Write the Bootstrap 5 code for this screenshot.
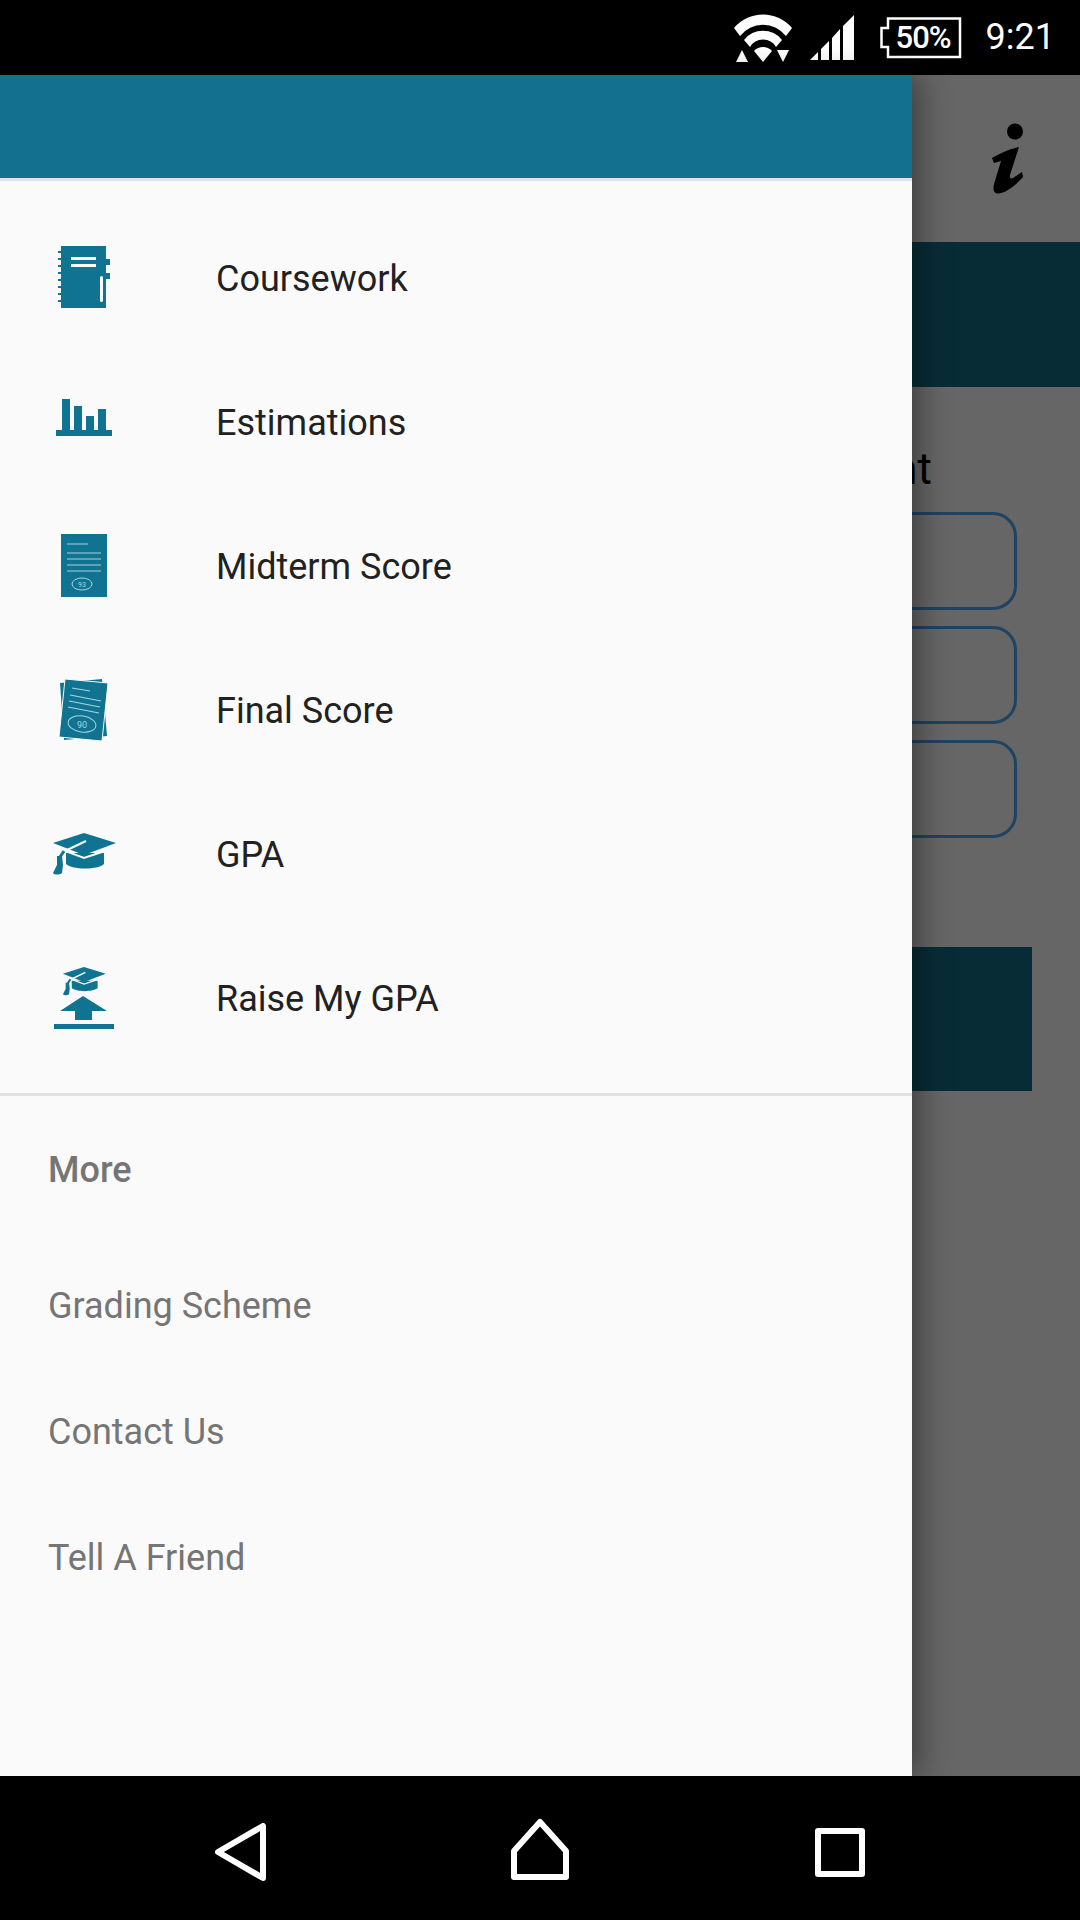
<!DOCTYPE html>
<html lang="en">
<head>
<meta charset="utf-8">
<title>Grade Calculator Menu</title>
<link rel="stylesheet" href="https://cdn.jsdelivr.net/npm/bootstrap@5.3.2/dist/css/bootstrap.min.css">
<style>
body { background: #000; font-family: Roboto, "Liberation Sans", sans-serif; }
.phone-screen { width: 1080px; height: 1920px; overflow: hidden; }
.status-strip { height: 75px; background: #000; color: #fff; padding-right: 25px; }
.status-strip svg { display: block; }
.batt-wrap { width: 82px; height: 42px; margin-left: 25px; font-size: 31px; font-weight: 500; letter-spacing: -1px; }
.batt-wrap svg { position: absolute; left: 0; top: 0; }
.batt-wrap span { position: relative; line-height: 42px; padding-left: 16px; display: block; }
.clock-text { font-size: 36px; font-weight: 400; margin-left: 24px; line-height: 75px; }
.app-area { height: 1701px; background: #666; }
.back-toolbar { height: 167px; padding-right: 57px; }
.back-band { height: 145px; background: #082c36; }
.back-title { font-size: 44px; color: #000; line-height: 48px; margin-top: 58px; padding-right: 148px; }
.back-field { height: 98px; margin: 0 63px 16px; border: 3px solid #1f4363; border-radius: 24px; }
.back-field-first { margin-top: 19px; }
.back-btn { height: 144px; background: #082c36; margin: 109px 48px 0; }
.side-drawer { left: 0; top: 0; width: 912px; height: 1701px; background: #fafafa; box-shadow: 8px 0 28px rgba(0,0,0,.38); }
.drawer-head { height: 103px; background: #14708f; }
.drawer-rule { height: 3px; background: #dde4e8; }
.main-menu { padding-top: 26px; padding-bottom: 22px; border-bottom: 3px solid #e0e0e0; }
.menu-row { height: 144px; padding: 0 0 0 40px; background: transparent; border: 0; color: #212121; font-size: 36px; }
.menu-row svg { width: 80px; height: 80px; margin-right: 96px; flex: none; }
.more-head { font-size: 36px; font-weight: 500; color: #757575; margin: 47px 0 0 48px; line-height: 54px; }
.more-list { margin-top: 46px; }
.more-row { height: 126px; padding: 0 0 0 48px; background: transparent; border: 0; color: #757575; font-size: 36px; }
.soft-keys { height: 144px; background: #000; padding: 0 90px; }
</style>
</head>
<body class="m-0">
<div class="phone-screen d-flex flex-column">

<div class="status-strip d-flex justify-content-end align-items-center">
    <svg width="60" height="50" viewBox="0 0 60 50">
        <path d="M1 15 A38 38 0 0 1 59 15 L53 23 A29 29 0 0 0 7 23 Z" fill="#fff"/>
        <path d="M11 27 A24 24 0 0 1 49 27 L43 34 A15 15 0 0 0 17 34 Z" fill="#fff"/>
        <path d="M21 38 A12 12 0 0 1 39 38 L30 49 Z" fill="#fff"/>
        <path d="M3 49 L9 37 L15 49 Z M44 37 L56 37 L50 49 Z" fill="#fff"/>
    </svg>
    <svg width="46" height="46" viewBox="0 0 46 46" class="ms-3">
        <path d="M1 45 L9 37 V45 Z M12 34 L20 26 V45 H12 Z M23 23 L31 14 V45 H23 Z M34 11 L45 0 V45 H34 Z" fill="#fff"/>
    </svg>
    <div class="batt-wrap position-relative">
        <svg width="82" height="42" viewBox="0 0 82 42">
            <path d="M8 1.5 H80 V40 H8 V30 H1.5 V11 H8 Z" fill="none" stroke="#fff" stroke-width="2.5"/>
        </svg>
        <span>50%</span>
    </div>
    <div class="clock-text">9:21</div>
</div>

<div class="app-area position-relative">
    <div class="back-toolbar d-flex justify-content-end align-items-center">
        <svg width="34" height="71" viewBox="0 0 34 71">
            <circle cx="26" cy="8.5" r="8" fill="#000"/>
            <path d="M3 35 C10 31 20 26 30 24 L21 52 C20.5 55 21 56 24 55 L33 49 L34 54 C27 62 17 70 9 70.5 C4 70.5 4 65 5 61 L12 38 L5 40 Z" fill="#000"/>
        </svg>
    </div>
    <div class="back-band"></div>
    <div class="back-title text-end">nt</div>
    <div class="back-field back-field-first"></div>
    <div class="back-field"></div>
    <div class="back-field"></div>
    <div class="back-btn"></div>

    <div class="side-drawer position-absolute">
        <div class="drawer-head"></div>
        <div class="drawer-rule"></div>
        <div class="list-group list-group-flush rounded-0 main-menu">
            <a class="list-group-item menu-row d-flex align-items-center">
                <svg viewBox="0 0 80 80">
                    <rect x="21" y="7" width="45" height="62" fill="#0f7391"/>
                    <path d="M18 13h3M18 20h3M18 27h3M18 34h3M18 41h3M18 48h3M18 55h3M18 62h3" stroke="#0f7391" stroke-width="2"/>
                    <path d="M66 20h4v6h-4zM66 34h4v6h-4z" fill="#0f7391"/>
                    <path d="M31 18h25v3h-25zM31 25h25v3h-25z" fill="#fafafa"/>
                    <rect x="60" y="37" width="3" height="26" rx="1.5" fill="#fafafa"/>
                </svg>
                Coursework
            </a>
            <a class="list-group-item menu-row d-flex align-items-center">
                <svg viewBox="0 0 80 80">
                    <path d="M16 47h56v6h-56zM22 16h8v31h-8zM34 23h8v24h-8zM46 33h8v14h-8zM58 26h8v21h-8z" fill="#0f7391"/>
                </svg>
                Estimations
            </a>
            <a class="list-group-item menu-row d-flex align-items-center">
                <svg viewBox="0 0 80 80">
                    <rect x="21" y="7" width="46" height="63" fill="#0f7391"/>
                    <path d="M27 17h21M27 26h34M27 32h34M27 38h34M27 44h34" stroke="#a9d3df" stroke-width="1.2"/>
                    <ellipse cx="42" cy="57" rx="10" ry="6" fill="none" stroke="#a9d3df" stroke-width="1"/>
                    <text x="42" y="59.5" font-size="7" text-anchor="middle" fill="#a9d3df" font-family="Roboto, sans-serif">93</text>
                </svg>
                Midterm Score
            </a>
            <a class="list-group-item menu-row d-flex align-items-center">
                <svg viewBox="0 0 80 80">
                    <path d="M20 12 L62 8 L67 65 L24 69 Z" fill="#0f7391"/>
                    <path d="M25 8 L68 12 L62 70 L19 66 Z" fill="#0f7391" stroke="#fafafa" stroke-width="1"/>
                    <path d="M32 17 L50 20 M30 24 L61 30 M29 30 L60 36 M28 36 L59 42" stroke="#a9d3df" stroke-width="1.2"/>
                    <ellipse cx="42" cy="53" rx="14" ry="8" transform="rotate(8 42 53)" fill="none" stroke="#a9d3df" stroke-width="1"/>
                    <text x="42" y="56.5" font-size="9" text-anchor="middle" fill="#a9d3df" font-family="Roboto, sans-serif">90</text>
                </svg>
                Final Score
            </a>
            <a class="list-group-item menu-row d-flex align-items-center">
                <svg viewBox="0 0 80 80">
                    <path d="M26 38 L64 38 V49 C58 55 32 55 26 49 Z" fill="#0f7391"/>
                    <path d="M13 28 L44 18 L76 28 L44 40 Z" fill="#0f7391"/>
                    <path d="M46 26 L25 36 L44 43 L65 36" fill="none" stroke="#fafafa" stroke-width="2"/>
                    <path d="M24 36 L20 42" stroke="#0f7391" stroke-width="3"/>
                    <path d="M17 41 L22 41 L23 50 L22 58 C19 60 15 60 13 58 L17 50 Z" fill="#0f7391"/>
                </svg>
                GPA
            </a>
            <a class="list-group-item menu-row d-flex align-items-center">
                <svg viewBox="0 0 80 80">
                    <g transform="translate(14.1 -4.2) scale(.68)">
                        <path d="M26 38 L64 38 V49 C58 55 32 55 26 49 Z" fill="#0f7391"/>
                        <path d="M13 28 L44 18 L76 28 L44 40 Z" fill="#0f7391"/>
                        <path d="M46 26 L25 36 L44 43 L65 36" fill="none" stroke="#fafafa" stroke-width="2"/>
                        <path d="M24 36 L20 42" stroke="#0f7391" stroke-width="3"/>
                        <path d="M17 41 L22 41 L23 50 L22 58 C19 60 15 60 13 58 L17 50 Z" fill="#0f7391"/>
                    </g>
                    <path d="M43 37 L67 52 H52 V61 H35 V52 H20 Z M14 65 H74 V70 H14 Z" fill="#0f7391"/>
                </svg>
                Raise My GPA
            </a>
        </div>
        <div class="more-head">More</div>
        <div class="list-group list-group-flush rounded-0 more-list">
            <a class="list-group-item more-row d-flex align-items-center">Grading Scheme</a>
            <a class="list-group-item more-row d-flex align-items-center">Contact Us</a>
            <a class="list-group-item more-row d-flex align-items-center">Tell A Friend</a>
        </div>
    </div>
</div>

<div class="soft-keys row g-0 align-items-center">
    <div class="col-4 d-flex justify-content-center">
        <svg width="80" height="80" viewBox="0 0 80 80">
            <path d="M63 18 V70 L18 44 Z" fill="none" stroke="#fff" stroke-width="6" stroke-linejoin="round"/>
        </svg>
    </div>
    <div class="col-4 d-flex justify-content-center">
        <svg width="80" height="80" viewBox="0 0 80 80">
            <path d="M40 14 L66 43 V69 H14 V43 Z" fill="none" stroke="#fff" stroke-width="6" stroke-linejoin="round"/>
        </svg>
    </div>
    <div class="col-4 d-flex justify-content-center">
        <svg width="80" height="80" viewBox="0 0 80 80">
            <rect x="18" y="23" width="44" height="43" fill="none" stroke="#fff" stroke-width="6" stroke-linejoin="round"/>
        </svg>
    </div>
</div>

</div>
<script src="https://cdn.jsdelivr.net/npm/bootstrap@5.3.2/dist/js/bootstrap.bundle.min.js"></script>
</body>
</html>
